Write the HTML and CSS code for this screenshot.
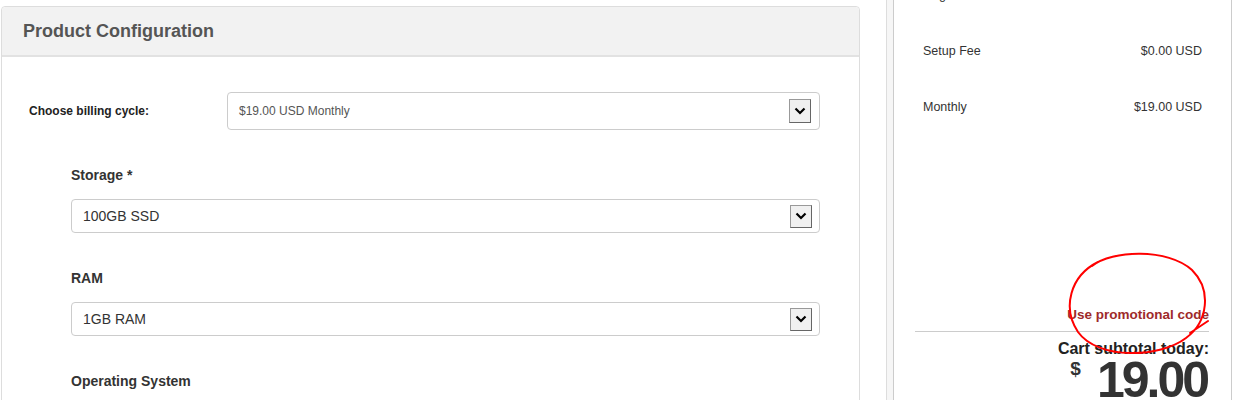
FILE: index.html
```html
<!DOCTYPE html>
<html lang="en">
<head>
<meta charset="utf-8">
<title>Product Configuration</title>
<link rel="stylesheet" href="styles.css">
</head>
<body>
<div class="page">
  <section class="config">
    <div class="config-head"><h2>Product Configuration</h2></div>
    <div class="config-body">
      <div class="billing-row">
        <label class="billing-label">Choose billing cycle:</label>
        <div class="select select-billing">
          <span class="select-value">$19.00 USD Monthly</span>
          <span class="select-btn"><svg width="12" height="8" viewBox="0 0 12 8"><path d="M1.5 1.5 L6 6 L10.5 1.5" fill="none" stroke="#000" stroke-width="2.2"/></svg></span>
        </div>
      </div>
      <div class="option">
        <div class="option-label">Storage *</div>
        <div class="select">
          <span class="select-value">100GB SSD</span>
          <span class="select-btn"><svg width="12" height="8" viewBox="0 0 12 8"><path d="M1.5 1.5 L6 6 L10.5 1.5" fill="none" stroke="#000" stroke-width="2.2"/></svg></span>
        </div>
      </div>
      <div class="option">
        <div class="option-label">RAM</div>
        <div class="select">
          <span class="select-value">1GB RAM</span>
          <span class="select-btn"><svg width="12" height="8" viewBox="0 0 12 8"><path d="M1.5 1.5 L6 6 L10.5 1.5" fill="none" stroke="#000" stroke-width="2.2"/></svg></span>
        </div>
      </div>
      <div class="option">
        <div class="option-label">Operating System</div>
      </div>
    </div>
  </section>

  <aside class="side">
    <div class="summary">
      <div class="summary-inner">
        <div class="row"><span>Region</span><span></span></div>
        <div class="row"><span>Setup Fee</span><span>$0.00 USD</span></div>
        <div class="row"><span>Monthly</span><span>$19.00 USD</span></div>
        <div class="promo"><a href="#">Use promotional code</a></div>
        <hr class="divider">
        <div class="subtotal-label">Cart subtotal today:</div>
        <div class="price"><span class="cur">$</span><span class="amount">19.00</span></div>
      </div>
    </div>
  </aside>
</div>
<svg class="annotation" width="1234" height="400" viewBox="0 0 1234 400">
  <path d="M1092 266 C1112 250 1168 248 1192 270 C1212 290 1208 322 1186 338 C1160 358 1098 360 1078 332 C1062 308 1070 276 1098 262 M1190 333 L1208 321" fill="none" stroke="#ff0000" stroke-width="2" stroke-linecap="round"/>
</svg>
</body>
</html>
```

FILE: styles.css
```css
html, body {
  margin: 0;
  padding: 0;
  background: #fff;
  overflow: hidden;
}
body {
  font-family: "Liberation Sans", Arial, sans-serif;
  color: #333;
  width: 1234px;
  height: 400px;
  position: relative;
}
.page {
  display: flex;
  align-items: flex-start;
  height: 400px;
}
.config {
  margin: 6px 0 0 1px;
  width: 859px;
  height: 460px;
  box-sizing: border-box;
  border: 1px solid #ddd;
  border-radius: 4px;
  flex: none;
}
.config-head {
  height: 48px;
  background: #f2f2f2;
  border-bottom: 2px solid #e2e2e2;
  border-radius: 4px 4px 0 0;
  display: flex;
  align-items: center;
  padding-left: 21px;
}
.config-head h2 {
  margin: 0;
  font-size: 18px;
  font-weight: bold;
  color: #555;
}
.config-body {
  padding-top: 35px;
}
.billing-row {
  display: flex;
  align-items: center;
  margin-left: 27px;
}
.billing-label {
  width: 198px;
  font-size: 12px;
  font-weight: bold;
  color: #222;
}
.select {
  box-sizing: border-box;
  border: 1px solid #ccc;
  border-radius: 4px;
  height: 34px;
  display: flex;
  align-items: center;
  justify-content: space-between;
  padding: 0 7px 0 11px;
  font-size: 14px;
  color: #333;
  background: #fff;
}
.select-billing {
  width: 593px;
  height: 38px;
  font-size: 12px;
  color: #555;
  padding-right: 8px;
}
.select-btn {
  box-sizing: border-box;
  width: 22px;
  height: 23px;
  background: #f0f0f0;
  border: 1px solid #999;
  border-right-color: #666;
  border-bottom-color: #666;
  display: flex;
  align-items: center;
  justify-content: center;
}
.select-billing .select-btn {
  height: 24px;
}
.option {
  margin: 35px 0 0 69px;
  width: 749px;
}
.option-label {
  font-size: 14px;
  line-height: 20px;
  font-weight: bold;
  color: #333;
  margin-bottom: 14px;
}
.side {
  margin-left: 26px;
  width: 346px;
  height: 400px;
  box-sizing: border-box;
  border-left: 1px solid #ddd;
  background: #f6f6f6;
  padding-left: 6px;
  flex: none;
}
.summary {
  box-sizing: border-box;
  height: 100%;
  background: #fff;
  border-left: 1px solid #ccc;
  border-right: 1px solid #ccc;
  width: 339px;
  overflow: hidden;
}
.summary-inner {
  margin-top: -33px;
  padding: 0 22px 0 21px;
}
.row {
  height: 56px;
  display: flex;
  align-items: center;
  justify-content: space-between;
  padding: 0 7px 0 8px;
  font-size: 12.5px;
  color: #333;
}
.promo {
  margin-top: 170px;
  text-align: right;
  line-height: 18px;
}
.promo a {
  color: #9e2a2a;
  font-weight: bold;
  font-size: 13.5px;
  text-decoration: none;
}
.divider {
  margin: 7px 0 0 0;
  border: 0;
  border-top: 1px solid #ccc;
  height: 0;
}
.subtotal-label {
  margin-top: 7px;
  text-align: right;
  font-size: 16px;
  line-height: 20px;
  font-weight: bold;
  color: #222;
}
.price {
  margin-top: 0;
  display: flex;
  justify-content: flex-end;
  align-items: flex-start;
  color: #333;
  font-weight: bold;
}
.cur {
  font-size: 19px;
  line-height: 20px;
  margin-top: 0;
  margin-right: 16px;
}
.amount {
  font-size: 50px;
  line-height: 42px;
  letter-spacing: -3px;
  margin-right: 2px;
}
.annotation {
  position: absolute;
  left: 0;
  top: 0;
  pointer-events: none;
}
```
